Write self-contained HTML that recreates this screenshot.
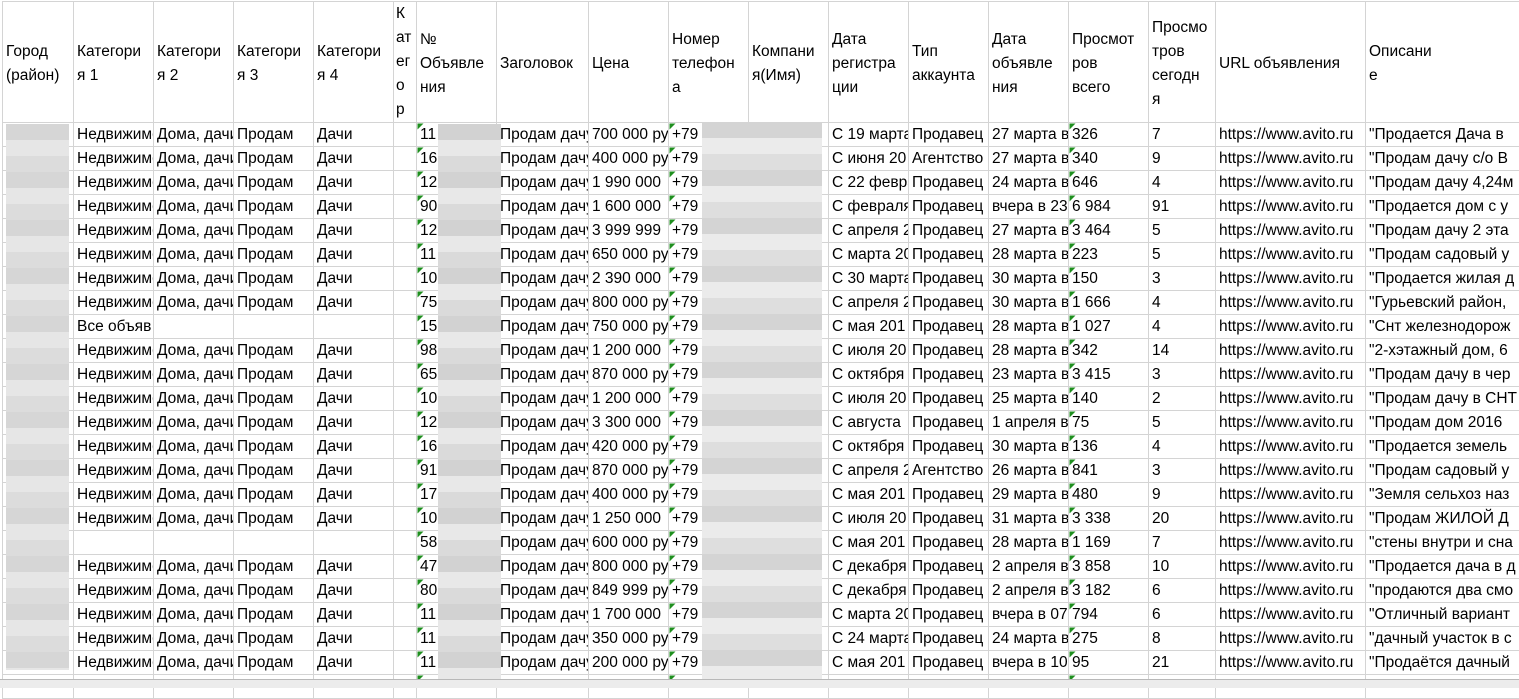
<!DOCTYPE html>
<html><head><meta charset="utf-8"><style>
body{margin:0;width:1519px;height:687px;overflow:hidden;background:#fff;font-family:"Liberation Sans",Arial,sans-serif;font-size:15.5px;color:#000;position:relative}
table{position:absolute;left:2px;top:1px;border-collapse:collapse;table-layout:fixed;width:1540px}
td{border:1px solid #d4d4d4;height:23px;padding:0 0 0 3px;white-space:nowrap;overflow:hidden;line-height:23px;vertical-align:bottom}
tr.h td{height:115px;padding-top:4px;vertical-align:middle;line-height:24px}
.g{background:linear-gradient(135deg,#1f8f1f 4px,transparent 4.5px)}
.bl{position:absolute;background:#ddd}
.tabs{position:absolute;left:0;top:679px;width:1519px;height:8px;background:#ececec;border-top:1px solid #b8b8b8}
</style></head><body>
<table>
<colgroup><col style="width:71px"><col style="width:80px"><col style="width:80px"><col style="width:80px"><col style="width:80px"><col style="width:23px"><col style="width:80px"><col style="width:92px"><col style="width:80px"><col style="width:80px"><col style="width:80px"><col style="width:80px"><col style="width:80px"><col style="width:80px"><col style="width:80px"><col style="width:67px"><col style="width:150px"><col style="width:180px"></colgroup>
<tr class="h"><td>Город<br>(район)</td><td>Категори<br>я 1</td><td>Категори<br>я 2</td><td>Категори<br>я 3</td><td>Категори<br>я 4</td><td style="padding:0 0 0 2px">К<br>ат<br>ег<br>о<br>р</td><td>№<br>Объявле<br>ния</td><td>Заголовок</td><td>Цена</td><td>Номер<br>телефон<br>а</td><td>Компани<br>я(Имя)</td><td>Дата<br>регистра<br>ции</td><td>Тип<br>аккаунта</td><td>Дата<br>объявле<br>ния</td><td>Просмот<br>ров<br>всего</td><td>Просмо<br>тров<br>сегодн<br>я</td><td>URL объявления</td><td>Описани<br>е</td></tr>
<tr><td></td><td>Недвижимость</td><td>Дома, дачи</td><td>Продам</td><td>Дачи</td><td></td><td class="g">11</td><td>Продам дачу</td><td>700 000 руб.</td><td class="g">+79</td><td></td><td>С 19 марта</td><td>Продавец</td><td>27 марта в</td><td class="g">326</td><td>7</td><td>https://www.avito.ru</td><td>"Продается Дача в</td></tr>
<tr><td></td><td>Недвижимость</td><td>Дома, дачи</td><td>Продам</td><td>Дачи</td><td></td><td class="g">16</td><td>Продам дачу</td><td>400 000 руб.</td><td class="g">+79</td><td></td><td>С июня 20</td><td>Агентство</td><td>27 марта в</td><td class="g">340</td><td>9</td><td>https://www.avito.ru</td><td>"Продам дачу с/о В</td></tr>
<tr><td></td><td>Недвижимость</td><td>Дома, дачи</td><td>Продам</td><td>Дачи</td><td></td><td class="g">12</td><td>Продам дачу</td><td>1 990 000</td><td class="g">+79</td><td></td><td>С 22 февраля</td><td>Продавец</td><td>24 марта в</td><td class="g">646</td><td>4</td><td>https://www.avito.ru</td><td>"Продам дачу 4,24м</td></tr>
<tr><td></td><td>Недвижимость</td><td>Дома, дачи</td><td>Продам</td><td>Дачи</td><td></td><td class="g">90</td><td>Продам дачу</td><td>1 600 000</td><td class="g">+79</td><td></td><td>С февраля</td><td>Продавец</td><td>вчера в 23</td><td class="g">6 984</td><td>91</td><td>https://www.avito.ru</td><td>"Продается дом с у</td></tr>
<tr><td></td><td>Недвижимость</td><td>Дома, дачи</td><td>Продам</td><td>Дачи</td><td></td><td class="g">12</td><td>Продам дачу</td><td>3 999 999</td><td class="g">+79</td><td></td><td>С апреля 2</td><td>Продавец</td><td>27 марта в</td><td class="g">3 464</td><td>5</td><td>https://www.avito.ru</td><td>"Продам дачу 2 эта</td></tr>
<tr><td></td><td>Недвижимость</td><td>Дома, дачи</td><td>Продам</td><td>Дачи</td><td></td><td class="g">11</td><td>Продам дачу</td><td>650 000 руб.</td><td class="g">+79</td><td></td><td>С марта 20</td><td>Продавец</td><td>28 марта в</td><td class="g">223</td><td>5</td><td>https://www.avito.ru</td><td>"Продам садовый у</td></tr>
<tr><td></td><td>Недвижимость</td><td>Дома, дачи</td><td>Продам</td><td>Дачи</td><td></td><td class="g">10</td><td>Продам дачу</td><td>2 390 000</td><td class="g">+79</td><td></td><td>С 30 марта</td><td>Продавец</td><td>30 марта в</td><td class="g">150</td><td>3</td><td>https://www.avito.ru</td><td>"Продается жилая д</td></tr>
<tr><td></td><td>Недвижимость</td><td>Дома, дачи</td><td>Продам</td><td>Дачи</td><td></td><td class="g">75</td><td>Продам дачу</td><td>800 000 руб.</td><td class="g">+79</td><td></td><td>С апреля 2</td><td>Продавец</td><td>30 марта в</td><td class="g">1 666</td><td>4</td><td>https://www.avito.ru</td><td>"Гурьевский район,</td></tr>
<tr><td></td><td>Все объяв</td><td></td><td></td><td></td><td></td><td class="g">15</td><td>Продам дачу</td><td>750 000 руб.</td><td class="g">+79</td><td></td><td>С мая 201</td><td>Продавец</td><td>28 марта в</td><td class="g">1 027</td><td>4</td><td>https://www.avito.ru</td><td>"Снт железнодорож</td></tr>
<tr><td></td><td>Недвижимость</td><td>Дома, дачи</td><td>Продам</td><td>Дачи</td><td></td><td class="g">98</td><td>Продам дачу</td><td>1 200 000</td><td class="g">+79</td><td></td><td>С июля 20</td><td>Продавец</td><td>28 марта в</td><td class="g">342</td><td>14</td><td>https://www.avito.ru</td><td>"2-хэтажный дом, 6</td></tr>
<tr><td></td><td>Недвижимость</td><td>Дома, дачи</td><td>Продам</td><td>Дачи</td><td></td><td class="g">65</td><td>Продам дачу</td><td>870 000 руб.</td><td class="g">+79</td><td></td><td>С октября</td><td>Продавец</td><td>23 марта в</td><td class="g">3 415</td><td>3</td><td>https://www.avito.ru</td><td>"Продам дачу в чер</td></tr>
<tr><td></td><td>Недвижимость</td><td>Дома, дачи</td><td>Продам</td><td>Дачи</td><td></td><td class="g">10</td><td>Продам дачу</td><td>1 200 000</td><td class="g">+79</td><td></td><td>С июля 20</td><td>Продавец</td><td>25 марта в</td><td class="g">140</td><td>2</td><td>https://www.avito.ru</td><td>"Продам дачу в СНТ</td></tr>
<tr><td></td><td>Недвижимость</td><td>Дома, дачи</td><td>Продам</td><td>Дачи</td><td></td><td class="g">12</td><td>Продам дачу</td><td>3 300 000</td><td class="g">+79</td><td></td><td>С августа</td><td>Продавец</td><td>1 апреля в</td><td class="g">75</td><td>5</td><td>https://www.avito.ru</td><td>"Продам дом 2016</td></tr>
<tr><td></td><td>Недвижимость</td><td>Дома, дачи</td><td>Продам</td><td>Дачи</td><td></td><td class="g">16</td><td>Продам дачу</td><td>420 000 руб.</td><td class="g">+79</td><td></td><td>С октября</td><td>Продавец</td><td>30 марта в</td><td class="g">136</td><td>4</td><td>https://www.avito.ru</td><td>"Продается земель</td></tr>
<tr><td></td><td>Недвижимость</td><td>Дома, дачи</td><td>Продам</td><td>Дачи</td><td></td><td class="g">91</td><td>Продам дачу</td><td>870 000 руб.</td><td class="g">+79</td><td></td><td>С апреля 2</td><td>Агентство</td><td>26 марта в</td><td class="g">841</td><td>3</td><td>https://www.avito.ru</td><td>"Продам садовый у</td></tr>
<tr><td></td><td>Недвижимость</td><td>Дома, дачи</td><td>Продам</td><td>Дачи</td><td></td><td class="g">17</td><td>Продам дачу</td><td>400 000 руб.</td><td class="g">+79</td><td></td><td>С мая 201</td><td>Продавец</td><td>29 марта в</td><td class="g">480</td><td>9</td><td>https://www.avito.ru</td><td>"Земля сельхоз наз</td></tr>
<tr><td></td><td>Недвижимость</td><td>Дома, дачи</td><td>Продам</td><td>Дачи</td><td></td><td class="g">10</td><td>Продам дачу</td><td>1 250 000</td><td class="g">+79</td><td></td><td>С июля 20</td><td>Продавец</td><td>31 марта в</td><td class="g">3 338</td><td>20</td><td>https://www.avito.ru</td><td>"Продам ЖИЛОЙ Д</td></tr>
<tr><td></td><td></td><td></td><td></td><td></td><td></td><td class="g">58</td><td>Продам дачу</td><td>600 000 руб.</td><td class="g">+79</td><td></td><td>С мая 201</td><td>Продавец</td><td>28 марта в</td><td class="g">1 169</td><td>7</td><td>https://www.avito.ru</td><td>"стены внутри и сна</td></tr>
<tr><td></td><td>Недвижимость</td><td>Дома, дачи</td><td>Продам</td><td>Дачи</td><td></td><td class="g">47</td><td>Продам дачу</td><td>800 000 руб.</td><td class="g">+79</td><td></td><td>С декабря</td><td>Продавец</td><td>2 апреля в</td><td class="g">3 858</td><td>10</td><td>https://www.avito.ru</td><td>"Продается дача в д</td></tr>
<tr><td></td><td>Недвижимость</td><td>Дома, дачи</td><td>Продам</td><td>Дачи</td><td></td><td class="g">80</td><td>Продам дачу</td><td>849 999 руб.</td><td class="g">+79</td><td></td><td>С декабря</td><td>Продавец</td><td>2 апреля в</td><td class="g">3 182</td><td>6</td><td>https://www.avito.ru</td><td>"продаются два смо</td></tr>
<tr><td></td><td>Недвижимость</td><td>Дома, дачи</td><td>Продам</td><td>Дачи</td><td></td><td class="g">11</td><td>Продам дачу</td><td>1 700 000</td><td class="g">+79</td><td></td><td>С марта 20</td><td>Продавец</td><td>вчера в 07</td><td class="g">794</td><td>6</td><td>https://www.avito.ru</td><td>"Отличный вариант</td></tr>
<tr><td></td><td>Недвижимость</td><td>Дома, дачи</td><td>Продам</td><td>Дачи</td><td></td><td class="g">11</td><td>Продам дачу</td><td>350 000 руб.</td><td class="g">+79</td><td></td><td>С 24 марта</td><td>Продавец</td><td>24 марта в</td><td class="g">275</td><td>8</td><td>https://www.avito.ru</td><td>"дачный участок в с</td></tr>
<tr><td></td><td>Недвижимость</td><td>Дома, дачи</td><td>Продам</td><td>Дачи</td><td></td><td class="g">11</td><td>Продам дачу</td><td>200 000 руб.</td><td class="g">+79</td><td></td><td>С мая 201</td><td>Продавец</td><td>вчера в 10</td><td class="g">95</td><td>21</td><td>https://www.avito.ru</td><td>"Продаётся дачный</td></tr>
<tr><td></td><td></td><td></td><td></td><td></td><td></td><td class="g"></td><td></td><td></td><td class="g"></td><td></td><td></td><td></td><td></td><td class="g"></td><td></td><td></td><td></td></tr>
</table>
<div class="bl" style="left:6px;top:124px;width:63px;height:546px;background:repeating-linear-gradient(180deg,#d6d6d6 0 16px,#e6e6e6 16px 32px,#dcdcdc 32px 48px)"></div>
<div class="bl" style="left:438px;top:124px;width:63px;height:563px;background:repeating-linear-gradient(180deg,#d2d2d2 0 16px,#e8e8e8 16px 32px,#dadada 32px 48px)"></div>
<div class="bl" style="left:702px;top:122px;width:120px;height:565px;background:repeating-linear-gradient(180deg,#d4d4d4 0 16px,#ebebeb 16px 32px,#dedede 32px 48px)"></div>
<div class="tabs"></div>
</body></html>
